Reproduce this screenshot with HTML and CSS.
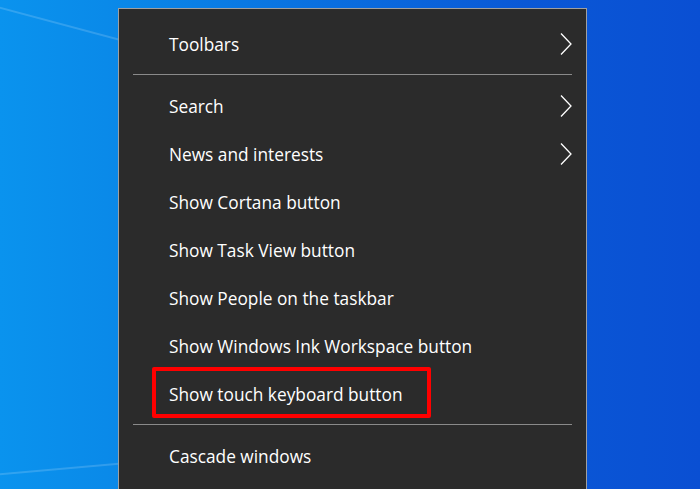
FILE: index.html
```html
<!DOCTYPE html>
<html lang="en">
<head>
<meta charset="utf-8">
<title>Taskbar context menu</title>
<link rel="stylesheet" href="styles.css">
</head>
<body>
<div class="desktop">
  <div class="beam beam-top"></div>
  <div class="beam beam-bottom"></div>
  <div class="menu">
    <div class="item"><span class="label">Toolbars</span><svg class="chev" viewBox="0 0 12 22" width="12" height="22"><path d="M1 0.5 L11 11 L1 21.5" fill="none" stroke="#fff" stroke-width="1.3"/></svg></div>
    <div class="sep"></div>
    <div class="item"><span class="label">Search</span><svg class="chev" viewBox="0 0 12 22" width="12" height="22"><path d="M1 0.5 L11 11 L1 21.5" fill="none" stroke="#fff" stroke-width="1.3"/></svg></div>
    <div class="item"><span class="label">News and interests</span><svg class="chev" viewBox="0 0 12 22" width="12" height="22"><path d="M1 0.5 L11 11 L1 21.5" fill="none" stroke="#fff" stroke-width="1.3"/></svg></div>
    <div class="item"><span class="label">Show Cortana button</span></div>
    <div class="item"><span class="label">Show Task View button</span></div>
    <div class="item"><span class="label">Show People on the taskbar</span></div>
    <div class="item"><span class="label">Show Windows Ink Workspace button</span></div>
    <div class="item highlighted"><span class="label">Show touch keyboard button</span></div>
    <div class="sep"></div>
    <div class="item"><span class="label">Cascade windows</span></div>
  </div>
</div>
</body>
</html>
```

FILE: styles.css
```css
html, body {
  margin: 0;
  padding: 0;
  width: 700px;
  height: 489px;
  overflow: hidden;
}

.desktop {
  position: relative;
  width: 700px;
  height: 489px;
  box-sizing: border-box;
  padding: 8px 0 0 118px;
  overflow: hidden;
  background: linear-gradient(90deg, #0a93ee 0%, #0a8ae9 15%, #0a70e0 45%, #0a58d6 75%, #0a4fd3 100%);
  font-family: "Open Sans", "Noto Sans", sans-serif;
}

.beam {
  position: absolute;
  height: 2px;
  background: rgba(255, 255, 255, 0.16);
  transform-origin: 0 0;
}

.beam-top {
  left: -10px;
  top: 4px;
  width: 200px;
  transform: rotate(15deg);
}

.beam-bottom {
  left: -10px;
  top: 474px;
  width: 200px;
  transform: rotate(-5deg);
}

.menu {
  position: relative;
  width: 469px;
  height: 520px;
  box-sizing: border-box;
  background: #2b2b2b;
  border: 1px solid #a0a0a0;
  padding-top: 11px;
  display: flex;
  flex-direction: column;
}

.item {
  position: relative;
  height: 48px;
  flex: none;
  display: flex;
  align-items: center;
  justify-content: space-between;
  padding: 0 14px 0 50px;
  color: #ffffff;
  font-size: 17.3px;
}

.label {
  white-space: nowrap;
}

.chev {
  display: block;
  flex: none;
}

.sep {
  flex: none;
  height: 1px;
  margin: 6px 14px 7px 14px;
  background: #8a8a8a;
}

.highlighted::after {
  content: "";
  position: absolute;
  left: 33px;
  top: -3px;
  width: 279px;
  height: 51px;
  box-sizing: border-box;
  border: 4.5px solid #ff0000;
  border-radius: 2px;
}
```
